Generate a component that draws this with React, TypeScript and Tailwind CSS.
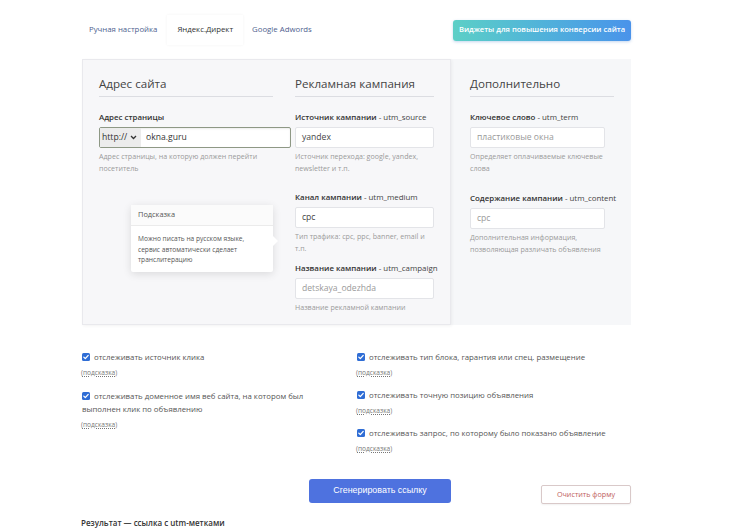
import React from "react";

const FONT = { fontFamily: '"Open Sans", "Noto Sans", sans-serif' };

function Check() {
  return (
    <svg width="8" height="8" viewBox="0 0 8 8" className="inline-block align-[-0.5px] mr-[4px]">
      <rect x="0" y="0" width="8" height="8" rx="1.5" fill="#2f6dd5" />
      <path d="M1.8 4.1 L3.3 5.6 L6.2 2.4" fill="none" stroke="#fff" strokeWidth="1.3" strokeLinecap="round" strokeLinejoin="round" />
    </svg>
  );
}

function Hint() {
  return (
    <div className="text-[6.6px] leading-[13px] mt-[2px] text-[#777] ml-[-1px]">
      (<span className="underline decoration-dotted underline-offset-[1px]">подсказка</span>)
    </div>
  );
}

function Field({
  bold,
  rest,
  value,
  placeholder,
  help,
  width,
  className = "",
}: {
  bold: string;
  rest?: string;
  value?: string;
  placeholder?: string;
  help: string;
  width: string;
  className?: string;
}) {
  return (
    <div className={className}>
      <div className="text-[7.9px] leading-[12px] text-[#333] whitespace-nowrap">
        <span className="font-semibold">{bold}</span>
        {rest && <span className="text-[#444]">{rest}</span>}
      </div>
      <div
        className={`${width} h-[21px] mt-[4px] bg-white border border-[#e3e4e8] rounded-[2px] px-[6px] flex items-center text-[8.6px]`}
      >
        {value ? (
          <span className="text-[#444]">{value}</span>
        ) : (
          <span className="text-[#9a9a9a]">{placeholder}</span>
        )}
      </div>
      <p className={`${width} text-[7.1px] leading-[11.5px] text-[#9a9a9a] mt-[3px]`}>{help}</p>
    </div>
  );
}

export default function App() {
  return (
    <div className="w-[730px] h-[530px] overflow-hidden bg-white text-[#444]" style={FONT}>
      <div className="ml-[81px] w-[550px]">
        {/* tabs row */}
        <div className="mt-[15px] h-[30px] flex items-center justify-between">
          <div className="flex h-full items-stretch text-[7.8px]">
            <div className="pl-[8px] pr-[10px] flex items-center text-[#4f5f8f]">Ручная настройка</div>
            <div className="px-[10px] flex items-center text-[#333] bg-white shadow-[0_0_3px_rgba(0,0,0,0.05)]">
              Яндекс.Директ
            </div>
            <div className="px-[9px] flex items-center text-[#4f5f8f]">Google Adwords</div>
          </div>
          <button className="w-[178px] h-[21px] rounded-[3px] text-white text-[7.6px] font-semibold bg-gradient-to-r from-[#5ccfc6] to-[#4a93ea] shadow-[0_1px_3px_rgba(60,120,200,0.3)]">
            Виджеты для повышения конверсии сайта
          </button>
        </div>

        {/* main panel */}
        <div className="mt-[14px] ml-px flex h-[266px]">
          <div className="relative w-[369px] h-full bg-[#f7f7f9] border border-[#e9e9ed] shadow-[1px_1px_3px_rgba(0,0,0,0.05)] pl-[16px] pt-[15px] flex gap-[4px]">
            <div className="w-[192px]">
              <h2 className="w-[174px] text-[11.6px] leading-[18px] text-[#444] pb-[3px] border-b border-[#dcdde2]">
                Адрес сайта
              </h2>
              <div className="mt-[14px]">
                <div className="text-[7.9px] leading-[12px] font-semibold text-[#333]">Адрес страницы</div>
                <div className="w-[192px] h-[21px] mt-[4px] bg-white border border-[#8e9885] rounded-[2px] flex items-stretch text-[8.6px] shadow-[inset_0_1px_2px_rgba(0,0,0,0.08)]">
                  <div className="w-[41px] bg-[#ececec] flex items-center justify-between pl-[2px] pr-[4px] text-[#333]">
                    <span>http://</span>
                    <svg width="7" height="5" viewBox="0 0 7 5">
                      <path d="M1 1 L3.5 3.5 L6 1" fill="none" stroke="#333" strokeWidth="1.3" />
                    </svg>
                  </div>
                  <div className="flex items-center pl-[5px] text-[#333]">okna.guru</div>
                </div>
                <p className="text-[7.1px] leading-[11.5px] text-[#9a9a9a] mt-[3px] w-[175px]">
                  Адрес страницы, на которую должен перейти посетитель
                </p>
              </div>
            </div>

            <div className="w-[139px]">
              <h2 className="text-[11.6px] leading-[18px] text-[#444] pb-[3px] border-b border-[#dcdde2] whitespace-nowrap">
                Рекламная кампания
              </h2>
              <Field
                className="mt-[14px]"
                bold="Источник кампании"
                rest=" - utm_source"
                value="yandex"
                help="Источник перехода: google, yandex, newsletter и т.п."
                width="w-[139px]"
              />
              <Field
                className="mt-[17px]"
                bold="Канал кампании"
                rest=" - utm_medium"
                value="cpc"
                help="Тип трафика: cpc, ppc, banner, email и т.п."
                width="w-[139px]"
              />
              <Field
                className="mt-[8px]"
                bold="Название кампании"
                rest=" - utm_campaign"
                placeholder="detskaya_odezhda"
                help="Название рекламной кампании"
                width="w-[139px]"
              />
            </div>

            {/* tooltip */}
            <div className="absolute left-[48px] top-[145px] w-[142px] h-[67px] bg-white rounded-[2px] shadow-[0_2px_8px_rgba(0,0,0,0.12)]">
              <div className="h-[21px] flex items-center px-[7px] text-[7.4px] text-[#555] border-b border-[#ebebeb] bg-[#fbfbfb]">
                Подсказка
              </div>
              <p className="px-[7px] pt-[8px] text-[6.6px] leading-[10.5px] text-[#555]">
                Можно писать на русском языке, сервис автоматически сделает транслитерацию
              </p>
              <div className="absolute right-[-5px] top-[31px] w-0 h-0 border-y-[5px] border-y-transparent border-l-[5px] border-l-white" />
            </div>
          </div>

          <div className="w-[180px] h-full bg-[#f6f7f9] pl-[19px] pt-[16px]">
            <h2 className="w-[144px] text-[11.6px] leading-[18px] text-[#444] pb-[3px] border-b border-[#dcdde2]">
              Дополнительно
            </h2>
            <Field
              className="mt-[14px]"
              bold="Ключевое слово"
              rest=" - utm_term"
              placeholder="пластиковые окна"
              help="Определяет оплачиваемые ключевые слова"
              width="w-[135px]"
            />
            <Field
              className="mt-[18px]"
              bold="Содержание кампании"
              rest=" - utm_content"
              placeholder="cpc"
              help="Дополнительная информация, позволяющая различать объявления"
              width="w-[135px]"
            />
          </div>
        </div>

        {/* checkboxes */}
        <div className="mt-[26px] flex text-[7.8px] leading-[13px] text-[#555]">
          <div className="w-[275px] ml-px flex flex-col gap-[11px]">
            <div>
              <p>
                <Check />
                отслеживать источник клика
              </p>
              <Hint />
            </div>
            <div>
              <p className="w-[232px]">
                <Check />
                отслеживать доменное имя веб сайта, на котором был выполнен клик по объявлению
              </p>
              <Hint />
            </div>
          </div>
          <div className="flex flex-col gap-[10px]">
            <div>
              <p>
                <Check />
                отслеживать тип блока, гарантия или спец. размещение
              </p>
              <Hint />
            </div>
            <div>
              <p>
                <Check />
                отслеживать точную позицию объявления
              </p>
              <Hint />
            </div>
            <div>
              <p>
                <Check />
                отслеживать запрос, по которому было показано объявление
              </p>
              <Hint />
            </div>
          </div>
        </div>

        {/* buttons */}
        <div className="mt-[24px] flex items-start pl-[228px]">
          <button
            className="w-[142px] h-[24px] rounded-[3px] bg-[#4e72df] text-white text-[8.9px]"
            style={{ fontFamily: '"Liberation Sans", Arial, sans-serif' }}
          >
            Сгенерировать ссылку
          </button>
          <button className="ml-[90px] mt-[6px] w-[90px] h-[19px] rounded-[2px] bg-white border border-[#d9c9c9] text-[#c0605e] text-[7.2px] shadow-[0_1px_2px_rgba(0,0,0,0.06)]">
            Очистить форму
          </button>
        </div>

        <div className="mt-[13px] text-[8px] leading-[12px] font-semibold text-[#333]">
          Результат — ссылка с utm-метками
        </div>
      </div>
    </div>
  );
}
